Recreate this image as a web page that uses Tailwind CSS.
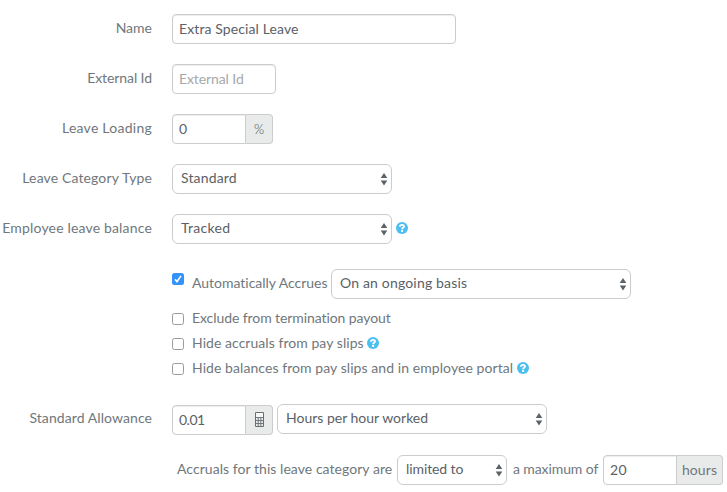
<!DOCTYPE html>
<html lang="en">
<head>
  <meta charset="UTF-8" />
  <meta name="viewport" content="width=device-width, initial-scale=1.0"/>
  <title>Leave Category</title>
  <script src="https://cdn.jsdelivr.net/npm/@tailwindcss/browser@4"></script>
</head>

<body class="bg-white overflow-hidden font-['Lato',sans-serif] text-[14px] leading-5 text-[#70777c]">

<!-- shared icons -->
<svg class="hidden">
  <symbol id="arrows" viewBox="0 0 8 13">
    <path d="M4 0L7.3 5H0.7ZM0.7 7.5H7.3L4 12.5Z" fill="#5b6368"/>
  </symbol>
  <symbol id="help" viewBox="0 0 12 12">
    <circle cx="6" cy="6" r="6" fill="#4bbff0"/>
    <path d="M4 4.7C4 2.3 8 2.3 8 4.5C8 5.8 6.1 5.8 6.1 7.2" fill="none" stroke="#fff" stroke-width="1.9"/>
    <path d="M5.1 8H7.1V9.9H5.1Z" fill="#fff"/>
  </symbol>
</svg>

<form class="w-[727px] pt-[14px]">

  <div class="flex h-[30px] mb-5">
    <label class="w-[152px] mr-5 pt-1 text-right whitespace-nowrap">Name</label>
    <input type="text" value="Extra Special Leave" class="w-[284px] h-[30px] px-1.5 pb-0.5 tracking-[0.11px] rounded border border-[#ccc] text-[#5b6166] shadow-[inset_0_1px_1px_rgba(0,0,0,0.075)] outline-none">
  </div>

  <div class="flex h-[30px] mb-5">
    <label class="w-[152px] mr-5 pt-1 text-right whitespace-nowrap tracking-[-0.08px]">External Id</label>
    <input type="text" placeholder="External Id" class="w-[104px] h-[30px] px-1.5 pb-0.5 tracking-[-0.1px] rounded border border-[#ccc] placeholder:text-[#a5a8aa] shadow-[inset_0_1px_1px_rgba(0,0,0,0.075)] outline-none">
  </div>

  <div class="flex h-[30px] mb-5">
    <label class="w-[152px] mr-5 pt-1 text-right whitespace-nowrap tracking-[0.25px]">Leave Loading</label>
    <input type="text" value="0" class="w-[74px] h-[30px] px-1.5 pb-0.5 rounded-l border border-[#ccc] text-[#5b6166] shadow-[inset_0_1px_1px_rgba(0,0,0,0.075)] outline-none">
    <span class="w-[27px] h-[30px] pt-1 text-center text-[13px] font-light text-[#454b50] rounded-r border border-l-0 border-[#ccc] bg-[#e9ebeb]">%</span>
  </div>

  <div class="flex h-[30px] mb-5">
    <label class="w-[152px] mr-5 pt-1 text-right whitespace-nowrap tracking-[0.13px]">Leave Category Type</label>
    <div class="relative">
      <select class="appearance-none block w-[220px] h-[30px] pl-2 pb-0.5 tracking-[0.15px] rounded-md border border-[#ccc] bg-white text-[#5b6166]"><option>Standard</option></select>
      <svg class="absolute right-1 top-[9px] w-2 h-[13px]"><use href="#arrows"/></svg>
    </div>
  </div>

  <div class="flex h-[30px] mb-[25px]">
    <label class="w-[152px] mr-5 pt-1 text-right whitespace-nowrap tracking-[0.17px]">Employee leave balance</label>
    <div class="relative">
      <select class="appearance-none block w-[220px] h-[30px] pl-2 pb-0.5 tracking-[0.28px] rounded-md border border-[#ccc] bg-white text-[#5b6166]"><option>Tracked</option></select>
      <svg class="absolute right-1 top-[9px] w-2 h-[13px]"><use href="#arrows"/></svg>
    </div>
    <svg class="w-3 h-3 ml-[3.5px] mt-2"><use href="#help"/></svg>
  </div>

  <div class="flex h-[30px] ml-[172px] mb-[9px]">
    <span class="w-3 h-3 mt-1 rounded-[2.5px] bg-[#3393fa]">
      <svg class="w-3 h-3" viewBox="0 0 12 12"><path d="M3 6.4L5 8.6L9 2.9" fill="none" stroke="#fff" stroke-width="1.6"/></svg>
    </span>
    <label class="w-[139px] pl-2 pt-1 whitespace-nowrap tracking-[-0.02px]">Automatically Accrues</label>
    <div class="relative ml-2">
      <select class="appearance-none block w-[300px] h-[30px] pl-2 pb-0.5 tracking-[0.17px] rounded-md border border-[#ccc] bg-white text-[#5b6166]"><option>On an ongoing basis</option></select>
      <svg class="absolute right-1 top-[9px] w-2 h-[13px]"><use href="#arrows"/></svg>
    </div>
  </div>

  <div class="flex h-5 ml-[172px] mb-[5px]">
    <input type="checkbox" class="appearance-none w-3 h-3 mt-[5px] mr-2 rounded-[2.5px] border border-[#979b9e] bg-white">
    <label class="whitespace-nowrap tracking-[-0.08px]">Exclude from termination payout</label>
  </div>
  <div class="flex h-5 ml-[172px] mb-[5px]">
    <input type="checkbox" class="appearance-none w-3 h-3 mt-[5px] mr-2 rounded-[2.5px] border border-[#979b9e] bg-white">
    <label class="w-[175px] whitespace-nowrap tracking-[0.05px]">Hide accruals from pay slips</label>
    <svg class="w-3 h-3 mt-1"><use href="#help"/></svg>
  </div>
  <div class="flex h-5 ml-[172px] mb-[26px]">
    <input type="checkbox" class="appearance-none w-3 h-3 mt-[5px] mr-2 rounded-[2.5px] border border-[#979b9e] bg-white">
    <label class="w-[324.5px] whitespace-nowrap tracking-[0.07px]">Hide balances from pay slips and in employee portal</label>
    <svg class="w-3 h-3 mt-1"><use href="#help"/></svg>
  </div>

  <div class="flex h-[31px] mb-5">
    <label class="w-[152px] mr-5 pt-1 text-right whitespace-nowrap tracking-[0.08px]">Standard Allowance</label>
    <input type="text" value="0.01" class="w-[74px] h-[30px] mt-px px-1.5 pb-0.5 tracking-[-0.5px] rounded-l border border-[#ccc] text-[#5b6166] shadow-[inset_0_1px_1px_rgba(0,0,0,0.075)] outline-none">
    <span class="flex w-[27px] h-[30px] mt-px pl-[9px] pt-1.5 rounded-r border border-l-0 border-[#ccc] bg-[#e9ebeb]">
      <svg class="w-[9px] h-[15px]" viewBox="0 0 9 15" fill="none" stroke="#686f73">
        <path d="M0.5 0.5H8.5V14.5H0.5Z"/>
        <path d="M0 5.5H9M0 8.5H9M0 11.5H9M3.2 5.5V14.5M5.8 5.5V14.5" stroke-width="0.9"/>
        <path d="M1 1H8V5H1Z" fill="#f6f7f7" stroke="none"/>
      </svg>
    </span>
    <div class="relative ml-1">
      <select class="appearance-none block w-[270px] h-[30px] pl-2 pb-0.5 rounded-md border border-[#ccc] bg-white text-[#5b6166]"><option>Hours per hour worked</option></select>
      <svg class="absolute right-1 top-[9px] w-2 h-[13px]"><use href="#arrows"/></svg>
    </div>
  </div>

  <div class="flex h-[30px] ml-[177px]">
    <span class="w-[220px] pt-1 whitespace-nowrap tracking-[0.05px]">Accruals for this leave category are</span>
    <div class="relative">
      <select class="appearance-none block w-[110px] h-[30px] pl-2 pb-0.5 tracking-[-0.1px] rounded-md border border-[#ccc] bg-white text-[#5b6166]"><option>limited to</option></select>
      <svg class="absolute right-1 top-[9px] w-2 h-[13px]"><use href="#arrows"/></svg>
    </div>
    <span class="w-[96px] pl-1.5 pt-1 whitespace-nowrap tracking-[-0.1px]">a maximum of</span>
    <input type="text" value="20" class="w-[74px] h-[30px] px-1.5 pb-0.5 tracking-[0.35px] rounded-l border border-[#ccc] text-[#5b6166] shadow-[inset_0_1px_1px_rgba(0,0,0,0.075)] outline-none">
    <span class="w-[46px] h-[30px] pt-1 text-center tracking-[0.1px] rounded-r border border-l-0 border-[#ccc] bg-[#e9ebeb]">hours</span>
  </div>

</form>

</body>
</html>
